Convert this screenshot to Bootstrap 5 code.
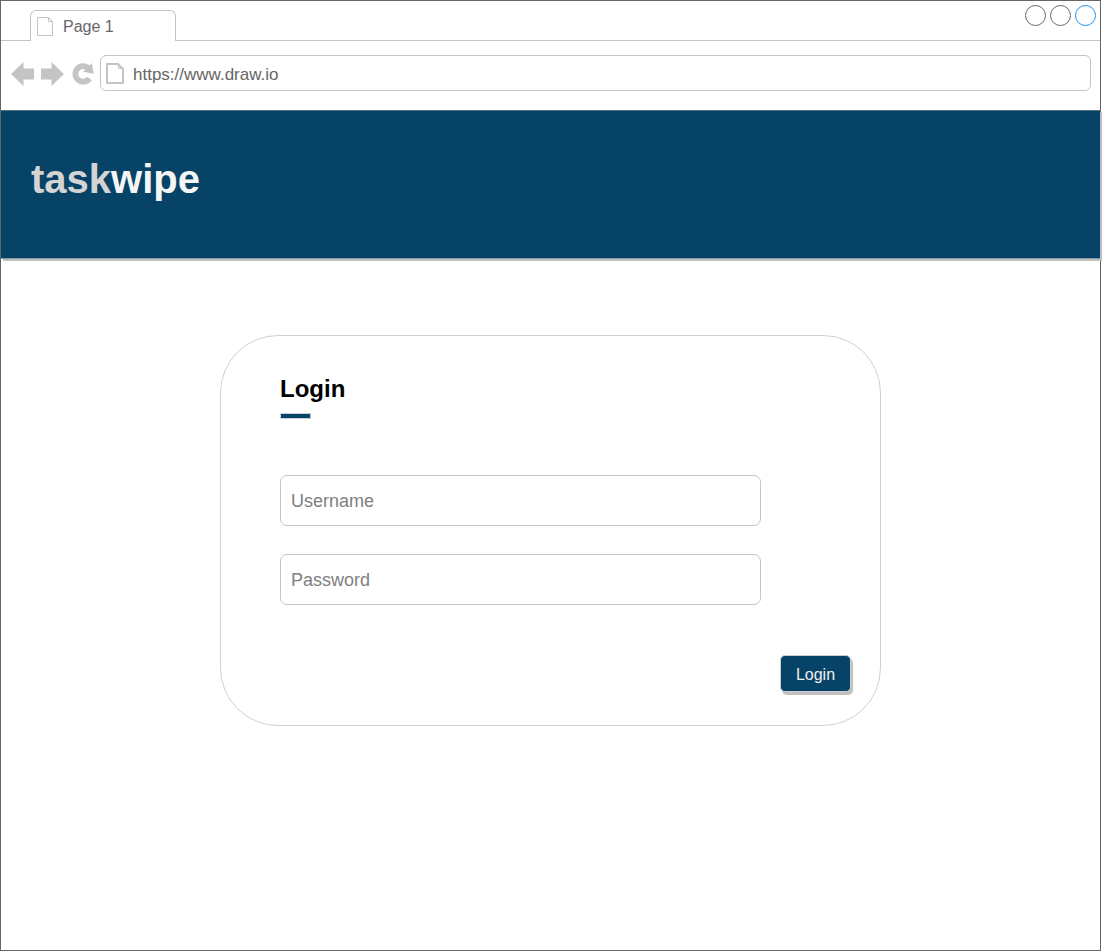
<!DOCTYPE html>
<html lang="en">
<head>
<meta charset="utf-8">
<meta name="viewport" content="width=device-width, initial-scale=1">
<title>taskwipe – Login</title>
<link href="https://cdn.jsdelivr.net/npm/bootstrap@5.3.0/dist/css/bootstrap.min.css" rel="stylesheet">
<style>
  :root { --navy: #074366; --line: #c4c4c4; --ink: #666; }
  body { font-family: "Liberation Sans", Arial, sans-serif; background: #fff; }
  .browser { margin-right: 2px; border: 1px solid var(--ink); }
  .strip { height: 40px; padding-left: 29px; padding-right: 4px; border-bottom: 1px solid var(--line); }
  .page-tab { width: 146px; height: 31px; margin-bottom: -1px; padding: 2px 6px 0; gap: 9px; font-size: 16px; line-height: 20px; color: var(--ink); background: #fff; border: 1px solid var(--line); border-bottom: 0; border-radius: 6px 6px 0 0; }
  .page-tab:hover { color: var(--ink); }
  .dots { gap: 4px; padding-top: 4px; }
  .dot { width: 21px; height: 21px; padding: 0; background: #fff; border: 1px solid var(--ink); border-radius: 50%; }
  .dot-active { border-color: #1e90f0; }
  .toolbar { padding: 14px 9px 19px 10px; gap: 5px; }
  .tools { gap: 6px; padding-top: 2px; }
  .tool { padding: 0; border: 0; background: none; line-height: 0; }
  .address { height: 36px; padding: 0 5px; gap: 9px; border: 1px solid var(--line); border-radius: 6px; }
  .address input { border: 0; outline: 0; padding: 3px 0 0; font-size: 17px; line-height: 20px; color: var(--ink); background: none; }
  .banner { height: 149px; padding: 0 30px 12px; background: var(--navy); border-top: 1px solid #526f80; border-bottom: 1px solid #8499a5; box-shadow: 2px 2px 0 #c0c0c0; }
  .brand { font-size: 40px; line-height: 46px; font-weight: 700; color: #f5f5f5; text-decoration: none; }
  .brand span { color: #d4d4d4; }
  .login-box { max-width: 661px; margin: 76px auto 0; padding: 38px 29px 33px 59px; border: 1px solid #d0d0d0; border-radius: 58px; }
  .login-box h1 { font-size: 24px; line-height: 30px; font-weight: 700; color: #000; margin: 0; }
  .login-box h1::after { content: ""; display: block; width: 31px; height: 6px; margin-top: 9px; background: var(--navy); border: 1px solid #c8d0d5; }
  .fields { margin: 56px 90px 50px 0; gap: 28px; }
  .fields .form-control { height: 51px; padding: 2px 10px 0; font-size: 18px; border-color: var(--line); border-radius: 7px; }
  .fields .form-control::placeholder { color: gray; }
  .btn-login, .btn-login:hover { height: 37px; width: 71px; padding: 2px 0 0; font-size: 16px; line-height: 20px; color: #f0f0f0; background: var(--navy); border: 1px solid #c8d0d5; border-radius: 5px; box-shadow: 2px 3px 0 #c0c0c0; }
</style>
</head>
<body>
<div class="browser min-vh-100">
  <div class="strip d-flex justify-content-between">
    <nav class="d-flex align-items-end">
      <a class="page-tab d-flex align-items-center text-decoration-none" href="#">
        <svg width="17" height="20" viewBox="0 0 17 20" fill="none" stroke="#c4c4c4" aria-hidden="true"><path d="M.5 .5h11l4 4v14H.5zM11.500 .5v4h4"/></svg>
        <span>Page 1</span>
      </a>
    </nav>
    <div class="dots d-flex align-items-start">
      <button class="dot" type="button" aria-label="Minimize"></button>
      <button class="dot" type="button" aria-label="Maximize"></button>
      <button class="dot dot-active" type="button" aria-label="Close"></button>
    </div>
  </div>
  <div class="toolbar d-flex align-items-center">
    <div class="tools d-flex">
      <button class="tool" type="button" aria-label="Back"><svg width="24" height="26" viewBox="0 0 24 26" fill="#c4c4c4"><path d="M0 13L12.500 1v6.500H23v11H12.500V25z"/></svg></button>
      <button class="tool" type="button" aria-label="Forward"><svg width="24" height="26" viewBox="0 0 24 26" fill="#c4c4c4"><path d="M23 13L10.500 1v6.500H0v11h10.500V25z"/></svg></button>
      <button class="tool" type="button" aria-label="Reload"><svg width="24" height="26" viewBox="0 0 24 26"><path d="M18.500 17.500A7.800 7.800 0 1 1 17.500 7.200" fill="none" stroke="#c4c4c4" stroke-width="5.800"/><path d="M21 2L22.500 13L12 10.500z" fill="#c4c4c4"/></svg></button>
    </div>
    <div class="address d-flex align-items-center flex-grow-1">
      <svg width="18" height="21" viewBox="0 0 18 21" fill="none" stroke="#c4c4c4" stroke-width="2" aria-hidden="true"><path d="M1 1h11l5 5v14H1z"/><path d="M12.500 1v4.500H17" stroke-width="1"/></svg>
      <input class="flex-grow-1" type="text" value="https://www.draw.io" aria-label="Address">
    </div>
  </div>
  <header class="banner d-flex align-items-center">
    <a class="brand" href="#"><span>task</span>wipe</a>
  </header>
  <main>
    <form class="login-box">
      <h1>Login</h1>
      <div class="fields d-flex flex-column">
        <input class="form-control" type="text" placeholder="Username" aria-label="Username">
        <input class="form-control" type="password" placeholder="Password" aria-label="Password">
      </div>
      <div class="d-flex justify-content-end">
        <button class="btn btn-login" type="submit">Login</button>
      </div>
    </form>
  </main>
</div>
<script src="https://cdn.jsdelivr.net/npm/bootstrap@5.3.0/dist/js/bootstrap.bundle.min.js"></script>
</body>
</html>
